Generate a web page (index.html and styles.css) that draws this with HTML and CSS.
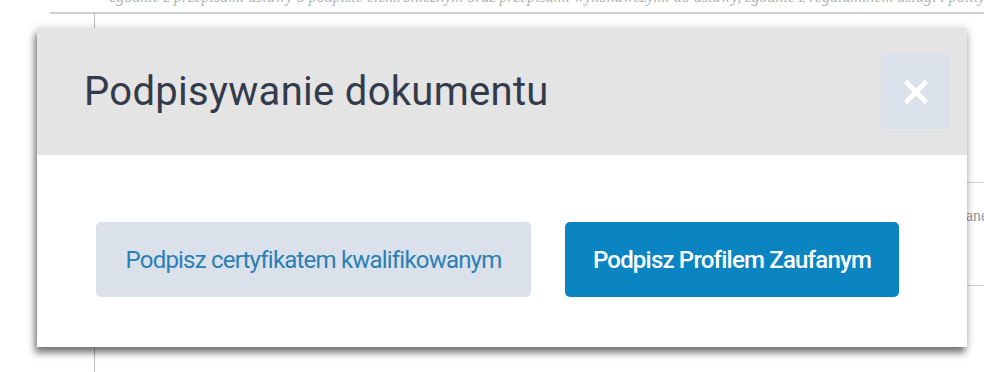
FILE: index.html
```html
<!DOCTYPE html>
<html lang="pl">
<head>
    <meta charset="UTF-8">
    <meta name="viewport" content="width=device-width, initial-scale=1.0">
    <title>Podpisywanie dokumentu</title>
    <link rel="stylesheet" href="styles.css">
</head>
<body>
    <div class="doc">
        <p class="doc-line"><span class="doc-text">zgodnie z przepisami ustawy o podpisie elektronicznym oraz przepisami wykonawczymi do ustawy, zgodnie z regulaminem usługi i polityką</span></p>
        <div class="doc-frame">
            <div class="doc-row">
                <span class="doc-cell"></span>
                <span class="doc-cell">dane</span>
            </div>
        </div>
    </div>

    <div class="modal">
        <div class="modal-header">
            <h1 class="modal-title">Podpisywanie dokumentu</h1>
            <button class="modal-close" aria-label="Zamknij">
                <svg width="26" height="26" viewBox="0 0 26 26">
                    <path d="M4 4 L22 22 M22 4 L4 22" stroke="#fff" stroke-width="5" stroke-linecap="round"/>
                </svg>
            </button>
        </div>
        <div class="modal-body">
            <button class="btn btn-light">Podpisz certyfikatem kwalifikowanym</button>
            <button class="btn btn-primary">Podpisz Profilem Zaufanym</button>
        </div>
    </div>
</body>
</html>
```

FILE: styles.css
```css
body {
    margin: 0;
    background-color: #fff;
    font-family: 'Roboto', sans-serif;
    height: 372px;
    overflow: hidden;
    position: relative;
}
.doc { padding-left: 50px; }
.doc-line {
    margin: 0;
    height: 12px;
    overflow: hidden;
    display: flex;
    align-items: flex-end;
    white-space: nowrap;
    font-family: 'Liberation Serif', serif;
    font-style: italic;
    font-size: 16px;
    color: #b5b5b5;
    padding-left: 60px;
}
.doc-text {
    line-height: 16px;
    margin-bottom: 7px;
}
.doc-frame {
    border-top: 2px solid #cfcfcf;
    height: 360px;
}
.doc-row {
    display: flex;
    height: 360px;
    margin-left: 44px;
    border-left: 1px solid #bdbdbd;
}
.doc-cell {
    flex: 1;
    color: #999;
    font-family: 'Liberation Serif', serif;
    font-size: 16px;
    text-align: right;
}
.doc-cell:last-child {
    flex: 0 0 18px;
    overflow: hidden;
    text-align: left;
    text-indent: -8px;
    margin-top: 168px;
    padding-top: 24px;
    height: 78px;
    border-top: 1px solid #cfcfcf;
    border-bottom: 1px solid #cfcfcf;
}
.modal {
    position: absolute;
    left: 37px;
    top: 28px;
    width: 930px;
    height: 319px;
    background: #fff;
    box-shadow: -2px 6px 7px rgba(0, 0, 0, 0.5), 0 0 10px rgba(0, 0, 0, 0.15);
}
.modal-header {
    height: 127px;
    background-color: #e4e4e4;
    display: flex;
    align-items: center;
    justify-content: space-between;
    padding: 0 17px 0 47px;
}
.modal-title {
    margin: 0;
    font-weight: 400;
    font-size: 40px;
    letter-spacing: 0.3px;
    color: #333b4b;
}
.modal-close {
    width: 69px;
    height: 75px;
    border: none;
    border-radius: 4px;
    background-color: #dbe1ea;
    display: flex;
    align-items: center;
    justify-content: center;
    cursor: pointer;
}
.modal-body {
    display: flex;
    gap: 34px;
    padding: 67px 0 0 59px;
}
.btn {
    height: 75px;
    border: none;
    border-radius: 5px;
    font-family: 'Roboto', sans-serif;
    font-size: 24px;
    letter-spacing: -0.8px;
    cursor: pointer;
}
.btn-light {
    width: 435px;
    background-color: #dbe1ea;
    color: #2a7fb5;
}
.btn-primary {
    width: 334px;
    background-color: #0a85c2;
    color: #fff;
    font-weight: 500;
}
```
